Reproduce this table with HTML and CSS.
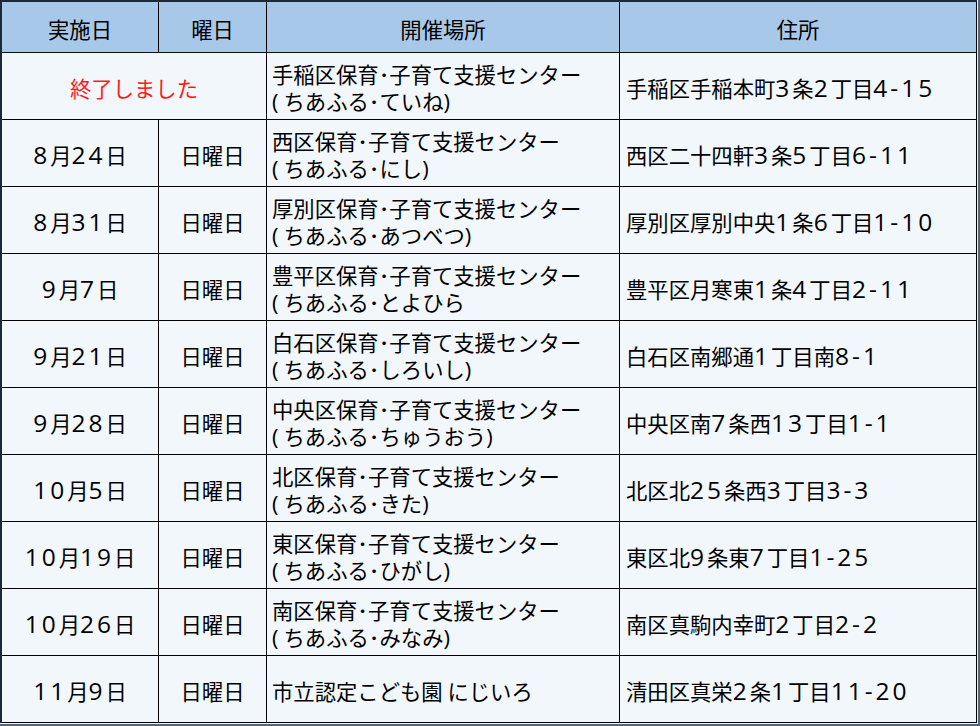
FILE: index.html
```html
<!DOCTYPE html>
<html lang="ja">
<head>
<meta charset="utf-8">
<title>開催日程</title>
<link rel="stylesheet" href="styles.css">
</head>
<body>
<div class="frame">
  <div class="sheet">
    <table class="schedule">
      <colgroup>
        <col class="c-date">
        <col class="c-day">
        <col class="c-place">
        <col class="c-addr">
      </colgroup>
      <thead>
        <tr>
          <th>実施日</th>
          <th>曜日</th>
          <th>開催場所</th>
          <th>住所</th>
        </tr>
      </thead>
      <tbody>
        <tr>
          <td class="done" colspan="2">終了しました</td>
          <td class="place">手稲区保育･子育て支援センター<br><span class="p">(</span>ちあふる･ていね<span class="p">)</span></td>
          <td class="addr">手稲区手稲本町<span class="n">3</span>条<span class="n">2</span>丁目<span class="n">4-15</span></td>
        </tr>
        <tr>
          <td class="center"><span class="n">8</span>月<span class="n">24</span>日</td>
          <td class="center">日曜日</td>
          <td class="place">西区保育･子育て支援センター<br><span class="p">(</span>ちあふる･にし<span class="p">)</span></td>
          <td class="addr">西区二十四軒<span class="n">3</span>条<span class="n">5</span>丁目<span class="n">6-11</span></td>
        </tr>
        <tr>
          <td class="center"><span class="n">8</span>月<span class="n">31</span>日</td>
          <td class="center">日曜日</td>
          <td class="place">厚別区保育･子育て支援センター<br><span class="p">(</span>ちあふる･あつべつ<span class="p">)</span></td>
          <td class="addr">厚別区厚別中央<span class="n">1</span>条<span class="n">6</span>丁目<span class="n">1-10</span></td>
        </tr>
        <tr>
          <td class="center"><span class="n">9</span>月<span class="n">7</span>日</td>
          <td class="center">日曜日</td>
          <td class="place">豊平区保育･子育て支援センター<br><span class="p">(</span>ちあふる･とよひら</td>
          <td class="addr">豊平区月寒東<span class="n">1</span>条<span class="n">4</span>丁目<span class="n">2-11</span></td>
        </tr>
        <tr>
          <td class="center"><span class="n">9</span>月<span class="n">21</span>日</td>
          <td class="center">日曜日</td>
          <td class="place">白石区保育･子育て支援センター<br><span class="p">(</span>ちあふる･しろいし<span class="p">)</span></td>
          <td class="addr">白石区南郷通<span class="n">1</span>丁目南<span class="n">8-1</span></td>
        </tr>
        <tr>
          <td class="center"><span class="n">9</span>月<span class="n">28</span>日</td>
          <td class="center">日曜日</td>
          <td class="place">中央区保育･子育て支援センター<br><span class="p">(</span>ちあふる･ちゅうおう<span class="p">)</span></td>
          <td class="addr">中央区南<span class="n">7</span>条西<span class="n">13</span>丁目<span class="n">1-1</span></td>
        </tr>
        <tr>
          <td class="center"><span class="n">10</span>月<span class="n">5</span>日</td>
          <td class="center">日曜日</td>
          <td class="place">北区保育･子育て支援センター<br><span class="p">(</span>ちあふる･きた<span class="p">)</span></td>
          <td class="addr">北区北<span class="n">25</span>条西<span class="n">3</span>丁目<span class="n">3-3</span></td>
        </tr>
        <tr>
          <td class="center"><span class="n">10</span>月<span class="n">19</span>日</td>
          <td class="center">日曜日</td>
          <td class="place">東区保育･子育て支援センター<br><span class="p">(</span>ちあふる･ひがし<span class="p">)</span></td>
          <td class="addr">東区北<span class="n">9</span>条東<span class="n">7</span>丁目<span class="n">1-25</span></td>
        </tr>
        <tr>
          <td class="center"><span class="n">10</span>月<span class="n">26</span>日</td>
          <td class="center">日曜日</td>
          <td class="place">南区保育･子育て支援センター<br><span class="p">(</span>ちあふる･みなみ<span class="p">)</span></td>
          <td class="addr">南区真駒内幸町<span class="n">2</span>丁目<span class="n">2-2</span></td>
        </tr>
        <tr>
          <td class="center"><span class="n">11</span>月<span class="n">9</span>日</td>
          <td class="center">日曜日</td>
          <td class="place">市立認定こども園 にじいろ</td>
          <td class="addr">清田区真栄<span class="n">2</span>条<span class="n">1</span>丁目<span class="n">11-20</span></td>
        </tr>
      </tbody>
    </table>
  </div>
</div>
</body>
</html>
```

FILE: styles.css
```css
html, body {
  margin: 0;
  padding: 0;
}

body {
  width: 980px;
  height: 726px;
  overflow: hidden;
  background: #4f687f;
  font-family: "Noto Sans CJK JP", "Open Sans", sans-serif;
  color: #000;
}

.frame {
  width: 980px;
  height: 726px;
  box-sizing: border-box;
  padding: 0 2px 2px 0;
  background: #4f687f;
}

.sheet {
  width: 978px;
  height: 724px;
  box-sizing: border-box;
  padding: 0 1px 1px 0;
  background: #eef3f8;
}

.schedule {
  width: 977px;
  table-layout: fixed;
  border-collapse: separate;
  border-spacing: 0;
  border-top: 2px solid #1b2a3a;
  border-left: 2px solid #1b2a3a;
  background: #f2f7fc;
  font-size: 21.33px;
}

.c-date { width: 157px; }
.c-day { width: 108px; }
.c-place { width: 353px; }
.c-addr { width: 357px; }

.schedule th,
.schedule td {
  box-sizing: border-box;
  border-right: 1px solid #000;
  border-bottom: 1px solid #000;
  padding: 0;
  vertical-align: middle;
}

.schedule th {
  height: 51px;
  background: #a8c8e9;
  font-weight: normal;
  text-align: center;
  border-bottom-color: #111;
  padding-top: 2px;
}

.schedule td {
  height: 67px;
  line-height: 27px;
  padding-top: 3px;
}

.n {
  font-family: "Open Sans", sans-serif;
  font-size: 24.5px;
  letter-spacing: 3px;
  font-weight: normal;
}

.p {
  font-family: "Open Sans", sans-serif;
  font-size: 22px;
  letter-spacing: 5px;
}

.schedule td.center,
.schedule td.done {
  text-align: center;
}

.schedule td.done {
  color: #ff1a1a;
}

.schedule td.place {
  padding-left: 5px;
}

.schedule td.addr {
  padding-left: 6px;
}
```
